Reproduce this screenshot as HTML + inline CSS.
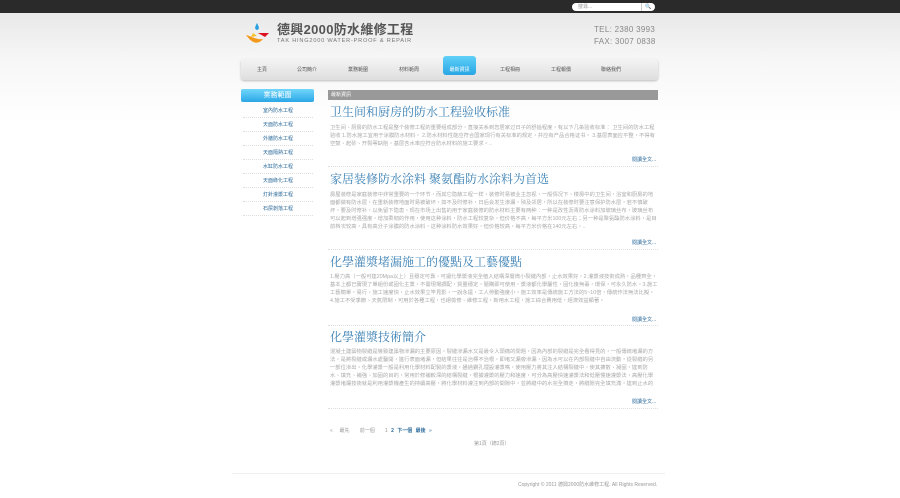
<!DOCTYPE html>
<html><head><meta charset="utf-8">
<style>
*{margin:0;padding:0;box-sizing:border-box}
body{width:900px;height:498px;overflow:hidden;background:#fff;font-family:"Liberation Sans","Noto Sans CJK TC",sans-serif;position:relative;color:#888}
.top{position:absolute;left:0;top:0;width:900px;height:13px;background:#2a2a2a}
.bg{position:absolute;left:0;top:13px;width:900px;height:110px;background:linear-gradient(#e8e8e8,#f6f6f6 40%,#fff)}
.search{position:absolute;left:572px;top:3px;width:83px;height:8px;background:#fff;border-radius:4px;font-size:5px;color:#999;padding-left:6px;line-height:8px}
.search i{position:absolute;right:0;top:0;width:14px;height:8px;border-left:1px solid #ccc;font-style:normal;color:#468;text-align:center;font-size:5px}
.a{position:absolute}
.nav{left:241px;top:59px;width:417px;height:21px;background:linear-gradient(#f4f4f4,#dedede);border-radius:3px;box-shadow:0 1px 2px #bbb}
.nav span{position:absolute;top:8px;font-size:5px;color:#555;width:50px;text-align:center;line-height:6px}
.act{left:443px;top:56px;width:33px;height:19px;background:linear-gradient(#5fd0f8,#29a6e4);border-radius:3px}
.sh{left:241px;top:89px;width:73px;height:13px;background:linear-gradient(#72d6fb,#2aa7e6);border-radius:2px;color:#fff;font-size:7px;text-align:center;line-height:13px}
.si{left:243px;width:70px;height:14px;border-bottom:1px dotted #ddd;font-size:5px;color:#2b6a9a;text-align:center;line-height:14px}
.mh{left:328px;top:90px;width:330px;height:10px;background:#999;color:#fff;font-size:5px;line-height:10px;padding-left:3px}
.t{left:330px;font-family:"Liberation Serif","Noto Serif CJK SC",serif;font-size:12px;line-height:16px;color:#3a80b4;white-space:nowrap}
.p{left:330px;width:328px;font-size:5.3px;line-height:8px;color:#aaa;word-break:break-all;overflow:hidden}
.m{left:632px;font-size:5px;line-height:6px;color:#2b6a9a}
.hr{left:328px;width:330px;border-top:1px dotted #ddd}
</style></head><body>
<div class="top"></div><div class="bg"></div>
<div class="search">搜尋...<i>🔍</i></div>
<svg class="a" style="left:245px;top:22px" width="28" height="24" viewBox="0 0 28 24">
<path d="M12 1 C10 5 9 7 12 8 C15 7 14 5 12 1Z" fill="#2aa0e0"/>
<path d="M13 11 L24 11 L20 15 Z" fill="#d12"/>
<path d="M1 13 C6 14 11 18 18 17 C14 22 8 23 1 13Z" fill="#f39a1e"/>
<path d="M8 11 L12 14 L6 15Z" fill="#f8c030"/>
</svg>
<div class="a" style="left:277px;top:22px;font-size:13px;line-height:15px;font-weight:bold;color:#555;letter-spacing:0.3px">德興2000防水維修工程</div>
<div class="a" style="left:277px;top:38px;font-size:5.6px;line-height:7px;color:#777;letter-spacing:0.8px">TAK HING2000 WATER-PROOF &amp; REPAIR</div>
<div class="a" style="left:594px;top:24px;font-size:8px;color:#888;letter-spacing:0.3px;line-height:12px">TEL: 2380 3993<br>FAX: 3007 0838</div>
<div class="a nav">
<span style="left:-4px">主頁</span><span style="left:41px">公司簡介</span><span style="left:92px">業務範圍</span><span style="left:143px">材料範周</span><span style="left:244px">工程相冊</span><span style="left:295px">工程報價</span><span style="left:345px">聯絡我們</span>
</div>
<div class="a act"></div><div class="a" style="left:443px;top:67px;width:33px;text-align:center;font-size:5px;line-height:6px;color:#fff">最新資訊</div>
<div class="a sh">業務範圍</div>
<div class="a si" style="top:104px">室內防水工程</div>
<div class="a si" style="top:118px">天面防水工程</div>
<div class="a si" style="top:132px">外牆防水工程</div>
<div class="a si" style="top:146px">天面隔熱工程</div>
<div class="a si" style="top:160px">水缸防水工程</div>
<div class="a si" style="top:174px">天面綠化工程</div>
<div class="a si" style="top:188px">灯針灌漿工程</div>
<div class="a si" style="top:202px">石屎剝落工程</div>
<div class="a mh">最新資訊</div>

<div class="a t" style="top:104px">卫生间和厨房的防水工程验收标准</div>
<div class="a p" style="top:124px;height:24px">卫生间、厨房的防水工程是整个装修工程的重要组成部分，直接关系到您居家过日子的舒适程度，有以下几条验收标准： 卫生间的防水工程验收 1.防水施工宜用于涂膜防水材料。 2.防水材料性能应符合国家现行有关标准的规定，并应有产品合格证书。 3.基层表面应平整，不得有空鼓、起砂、开裂等缺陷。基层含水率应符合防水材料的施工要求。..</div>
<div class="a m" style="top:157px">閱讀全文...</div>
<div class="a hr" style="top:166px"></div>

<div class="a t" style="top:171px">家居装修防水涂料 聚氨酯防水涂料为首选</div>
<div class="a p" style="top:191px;height:40px">房屋装修是家庭装修中非常重要的一个环节，而其它隐蔽工程一样，装修时易被业主忽视，一般情况下，楼房中的卫生间，浴室和厨房的地面都做有防水层，在重新装修地面时易被破坏，如不及时修补，日后会发生渗漏，殃及邻居，所以在装修时要注意保护防水层，若不慎破坏，要及时修补，以免留下隐患。现在市场上出售的用于家庭装修的防水材料主要有两种：一种是改性沥青防水涂料加玻璃丝布，玻璃丝布可以起到增强强度，增加柔韧的作用，使用这种涂料，防水工程较复杂，但价格不高，每平方米100元左右；另一种是聚氨酯防水涂料，是目前档次较高，具有高分子涂膜的防水涂料，这种涂料防水效果好，但价格较高，每平方米价格在140元左右，..</div>
<div class="a m" style="top:240px">閱讀全文...</div>
<div class="a hr" style="top:249px"></div>

<div class="a t" style="top:254px">化學灌漿堵漏施工的優點及工藝優點</div>
<div class="a p" style="top:273px;height:32px">1.壓力高（一般可達20Mpa以上）且穩定可靠，可讓化學漿液完全植入結構深層微小裂縫內部，止水效果好。2.灌漿液技術成熟，品種齊全，基本上都已實現了單組份或固化主業，不需現場調配，質量穩定，隨購即可使用，漿液都化學屬性，固化後無毒，環保，可永久防水。3.施工工藝簡單，易行，施工速度快，止水效果立竿見影，一說永遠，工人勞動強度小，施工效率是傳統施工方法的5~10倍，傳統作法無法比擬。4.施工不受季節、天氣限制，可用於各種工程，也絕檢修、維修工程，新用水工程，施工綜合費用低，經濟效益顯著。</div>
<div class="a m" style="top:317px">閱讀全文...</div>
<div class="a hr" style="top:325px"></div>

<div class="a t" style="top:329px">化學灌漿技術簡介</div>
<div class="a p" style="top:348px;height:40px">混凝土建築物裂縫是導致建築物滲漏的主要原因，裂縫滲漏水又是最令人頭痛的問題，因為內部的裂縫是完全看得見的，一般傳統堵漏的方法，是將裂縫或漏水處鑿開，進行表面堵漏，但結果往往是治標不治根，即堵又漏旁滲漏，因為水可以在內部裂縫中自由流動，從裂縫的另一部位滲出，化學灌漿一般是利用化學材料配製的漿液，通過鑽孔埋設灌漿嘴，使用壓力將其注入結構裂縫中，使其擴散、凝固，達到防水、填充、補強、加固的目的，常用於修補較深的結構裂縫，根據灌漿的壓力和速度，可分為高壓快速灌漿法和低壓慢速灌漿法，高壓化學灌漿堵漏技術就是利用灌漿機產生的持續高壓，將化學材料灌注到內部的間隙中，並將縫中的水完全擠走，將縫隙完全填充滿，達到止水的目的。</div>
<div class="a m" style="top:399px">閱讀全文...</div>
<div class="a hr" style="top:408px"></div>

<div class="a" style="left:330px;top:428px;font-size:5px;line-height:6px;color:#999;word-spacing:2px">« &nbsp;最先 &nbsp; 前一個 &nbsp; 1 <b style="color:#2b6a9a">2 下一個 最後</b> <span style="color:#2b6a9a">»</span></div>
<div class="a" style="left:474px;top:441px;font-size:5px;line-height:6px;color:#999">第1頁（總2頁）</div>
<div class="a" style="left:232px;top:473px;width:433px;border-top:1px solid #eee"></div>
<div class="a" style="left:518px;top:482px;font-size:5px;line-height:6px;color:#999">Copyright © 2011 德興2000防水維修工程. All Rights Reserved.</div>
</body></html>
